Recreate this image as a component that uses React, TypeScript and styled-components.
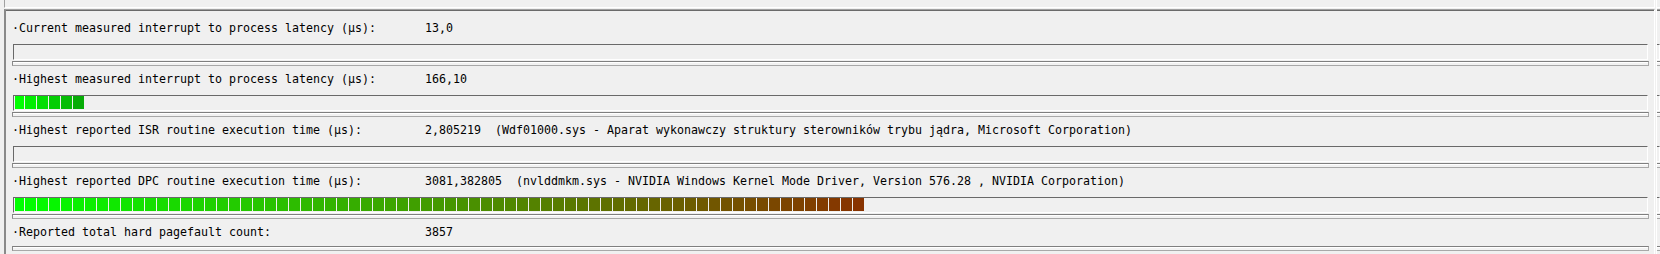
import React from "react";
import styled, { createGlobalStyle } from "styled-components";

const GlobalStyle = createGlobalStyle`
  html, body {
    margin: 0;
    padding: 0;
    background: #f0f0f0;
  }
`;

const Page = styled.div`
  display: flex;
  width: 1660px;
  height: 254px;
  padding-left: 4px;
  box-sizing: border-box;
  overflow: hidden;
  background: #f0f0f0;
  font-family: "DejaVu Sans Mono", "Liberation Mono", monospace;
  font-size: 11.63px;
  color: #000;
`;

const Column = styled.div<{ $sliver?: boolean }>`
  display: flex;
  flex-direction: column;
  flex: ${(p) => (p.$sliver ? "1 1 auto" : "0 0 1651px")};
  margin-left: ${(p) => (p.$sliver ? "1px" : "0")};
  ${(p) => (p.$sliver ? "border-left: 1px solid #fff;" : "")}
  min-width: 0;
  overflow: hidden;
`;

const UpperStub = styled.div<{ $sliver?: boolean }>`
  height: 7px;
  flex: 0 0 auto;
  border-left: ${(p) => (p.$sliver ? "0" : "1px solid #a0a0a0")};
  border-right: ${(p) => (p.$sliver ? "0" : "1px solid #fff")};
  border-bottom: 1px solid #fff;
`;

const Panel = styled.div<{ $sliver?: boolean }>`
  margin-top: 1px;
  flex: 1 1 auto;
  display: flex;
  flex-direction: column;
  padding: 5px ${(p) => (p.$sliver ? "0" : "6px")} 0
    ${(p) => (p.$sliver ? "0" : "7px")};
  border-top: 1px solid #a0a0a0;
  border-left: ${(p) => (p.$sliver ? "0" : "2px solid #8a8a8a")};
  border-right: ${(p) => (p.$sliver ? "0" : "1px solid #fff")};
  box-shadow: inset 0 1px 0 #6a6a6a;
  overflow: hidden;
`;

const Row = styled.div`
  display: flex;
  flex-direction: column;
  padding-top: 6px;
`;

const Line = styled.div`
  display: flex;
  height: 14px;
  line-height: 14px;
  margin-left: -1px;
  white-space: pre;
`;

const Label = styled.span`
  flex: 0 0 413px;
`;

const Value = styled.span`
  flex: 0 0 auto;
`;

const Bar = styled.div<{ $sliver?: boolean }>`
  display: flex;
  gap: 1px;
  height: 16px;
  margin-top: 9px;
  padding: 0 0 0 1px;
  box-sizing: border-box;
  border-top: 1px solid #696969;
  border-left: ${(p) => (p.$sliver ? "0" : "1px solid #696969")};
  border-right: 1px solid #fff;
  border-bottom: 1px solid #fff;
  background: #f0f0f0;
  overflow: hidden;
`;

const Block = styled.div`
  flex: 0 0 11px;
  height: 13px;
  &:first-child {
    flex-basis: 9px;
  }
`;

const Separator = styled.div<{ $last?: boolean; $sliver?: boolean }>`
  height: 5px;
  margin: ${(p) => (p.$last ? "7px" : "1px")} -1px 0
    ${(p) => (p.$sliver ? "0" : "-1px")};
  box-sizing: border-box;
  border-top: 1px solid #7f7f7f;
  border-left: ${(p) => (p.$sliver ? "0" : "1px solid #8a8a8a")};
  border-right: 1px solid #a8a8a8;
  border-bottom: 1px solid #a8a8a8;
  background: #f2f2f2;
  box-shadow: inset 0 1px 0 #fff;
`;

type Stat = {
  label: string;
  value: string;
  blocks?: string[];
  last?: boolean;
};

const mix = (a: number[], b: number[], t: number) =>
  `rgb(${a.map((v, i) => Math.round(v + (b[i] - v) * t)).join(",")})`;

const gradient = (n: number, from: number[], to: number[]) =>
  Array.from({ length: n }, (_, i) => mix(from, to, n > 1 ? i / (n - 1) : 0));

const stats: Stat[] = [
  {
    label: "·Current measured interrupt to process latency (µs):",
    value: "13,0",
    blocks: [],
  },
  {
    label: "·Highest measured interrupt to process latency (µs):",
    value: "166,10",
    blocks: gradient(6, [0, 255, 0], [6, 172, 6]),
  },
  {
    label: "·Highest reported ISR routine execution time (µs):",
    value:
      "2,805219  (Wdf01000.sys - Aparat wykonawczy struktury sterowników trybu jądra, Microsoft Corporation)",
    blocks: [],
  },
  {
    label: "·Highest reported DPC routine execution time (µs):",
    value:
      "3081,382805  (nvlddmkm.sys - NVIDIA Windows Kernel Mode Driver, Version 576.28 , NVIDIA Corporation)",
    blocks: gradient(71, [0, 255, 0], [136, 51, 0]),
  },
  {
    label: "·Reported total hard pagefault count:",
    value: "3857",
    last: true,
  },
];

function StatRow({ stat, sliver }: { stat: Stat; sliver?: boolean }) {
  return (
    <Row>
      <Line>
        <Label>{sliver ? " " : stat.label}</Label>
        <Value>{sliver ? "" : stat.value}</Value>
      </Line>
      {stat.blocks && (
        <Bar $sliver={sliver}>
          {(sliver ? [] : stat.blocks).map((c, i) => (
            <Block key={i} style={{ background: c }} />
          ))}
        </Bar>
      )}
      <Separator $last={stat.last} $sliver={sliver} />
    </Row>
  );
}

export default function App() {
  return (
    <>
      <GlobalStyle />
      <Page>
        <Column>
          <UpperStub />
          <Panel>
            {stats.map((s) => (
              <StatRow key={s.label} stat={s} />
            ))}
          </Panel>
        </Column>
        <Column $sliver>
          <UpperStub $sliver />
          <Panel $sliver>
            {stats.map((s) => (
              <StatRow key={s.label} stat={s} sliver />
            ))}
          </Panel>
        </Column>
      </Page>
    </>
  );
}
